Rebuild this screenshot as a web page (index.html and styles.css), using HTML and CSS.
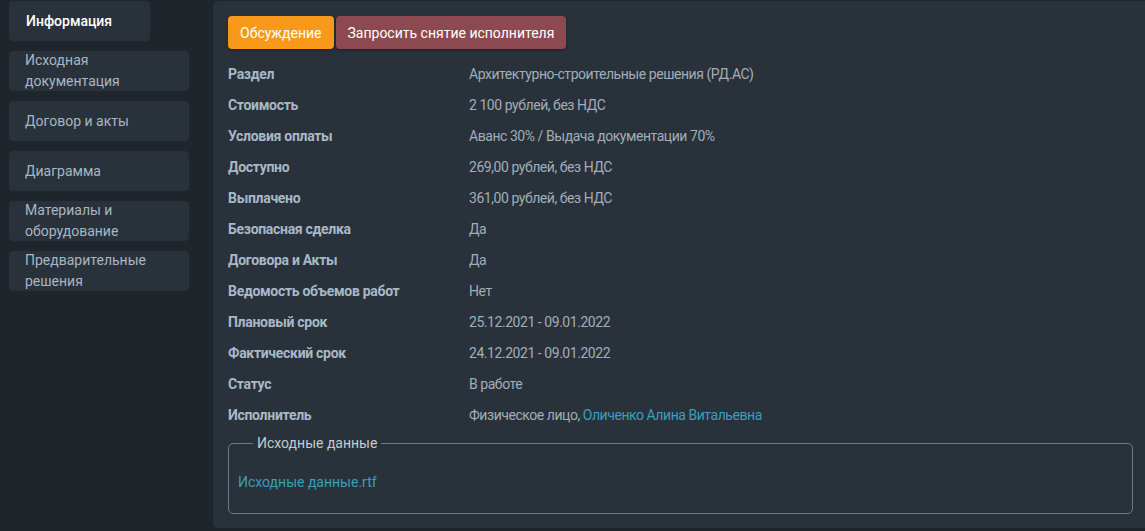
FILE: index.html
```html
<!DOCTYPE html>
<html lang="ru">
<head>
<meta charset="utf-8">
<link rel="stylesheet" href="styles.css">
</head>
<body>
<div class="layout">
  <nav class="sidebar">
    <div class="nav-item active">Информация</div>
    <div class="nav-item">Исходная документация</div>
    <div class="nav-item">Договор и акты</div>
    <div class="nav-item">Диаграмма</div>
    <div class="nav-item">Материалы и оборудование</div>
    <div class="nav-item">Предварительные решения</div>
  </nav>
  <main class="panel">
    <div class="actions">
      <button class="btn btn-orange">Обсуждение</button>
      <button class="btn btn-red">Запросить снятие исполнителя</button>
    </div>
    <dl class="info">
      <dt>Раздел</dt><dd>Архитектурно-строительные решения (РД.АС)</dd>
      <dt>Стоимость</dt><dd>2 100 рублей, без НДС</dd>
      <dt>Условия оплаты</dt><dd>Аванс 30% / Выдача документации 70%</dd>
      <dt>Доступно</dt><dd>269,00 рублей, без НДС</dd>
      <dt>Выплачено</dt><dd>361,00 рублей, без НДС</dd>
      <dt>Безопасная сделка</dt><dd>Да</dd>
      <dt>Договора и Акты</dt><dd>Да</dd>
      <dt>Ведомость объемов работ</dt><dd>Нет</dd>
      <dt>Плановый срок</dt><dd>25.12.2021 - 09.01.2022</dd>
      <dt>Фактический срок</dt><dd>24.12.2021 - 09.01.2022</dd>
      <dt>Статус</dt><dd>В работе</dd>
      <dt>Исполнитель</dt><dd>Физическое лицо, <a class="link" href="#">Оличенко Алина Витальевна</a></dd>
    </dl>
    <fieldset class="files">
      <legend>Исходные данные</legend>
      <a class="link" href="#">Исходные данные.rtf</a>
    </fieldset>
  </main>
</div>
</body>
</html>
```
FILE: styles.css
```css
html, body {
  margin: 0;
  padding: 0;
  background: #1e252b;
  font-family: Roboto, "Liberation Sans", sans-serif;
  font-size: 14px;
}
.layout {
  display: flex;
  align-items: flex-start;
  padding-top: 1px;
}
.sidebar {
  width: 180px;
  margin-left: 9px;
  margin-right: 24px;
  display: flex;
  flex-direction: column;
  gap: 10px;
}
.nav-item {
  height: 40px;
  display: flex;
  align-items: center;
  padding: 0 16px;
  box-sizing: border-box;
  background: #29323b;
  border-radius: 4px;
  color: #a8b6c3;
  line-height: 21px;
}
.nav-item.active {
  width: 141px;
  padding-left: 17px;
  color: #ffffff;
  font-weight: 500;
  height: 40px;
}
.panel {
  flex: 1;
  background: #29323b;
  border-radius: 5px 0 0 5px;
  padding: 15px 12px 15px 15px;
  box-sizing: border-box;
  height: 527px;
}
.actions {
  display: flex;
  gap: 2px;
}
.btn {
  height: 33px;
  border: none;
  border-radius: 4px;
  color: #ffffff;
  font-family: Roboto, "Liberation Sans", sans-serif;
  font-size: 14px;
  padding: 0 12px;
  box-shadow: 0 1px 3px rgba(0,0,0,0.35);
}
.btn-orange { background: #f8991b; }
.btn-red { background: #8c4a50; }
.info {
  display: grid;
  grid-template-columns: 241px 1fr;
  margin: 10px 0 0;
}
.info dt, .info dd {
  margin: 0;
  line-height: 31px;
}
.info dt {
  font-weight: 700;
  letter-spacing: -0.3px;
  color: #a9b8c6;
}
.info dd {
  font-weight: 400;
  letter-spacing: -0.45px;
  color: #a3adb7;
}
.link {
  color: #3b9ebd;
  text-decoration: none;
}
.files {
  margin: 4px 0 0;
  border: 1px solid #6a7986;
  border-radius: 5px;
  padding: 20px 10px 20px 9px;
  line-height: 21px;
}
.files legend {
  color: #c2cad2;
  padding: 0 4px;
  margin-left: 15px;
  line-height: 17px;
}
```
